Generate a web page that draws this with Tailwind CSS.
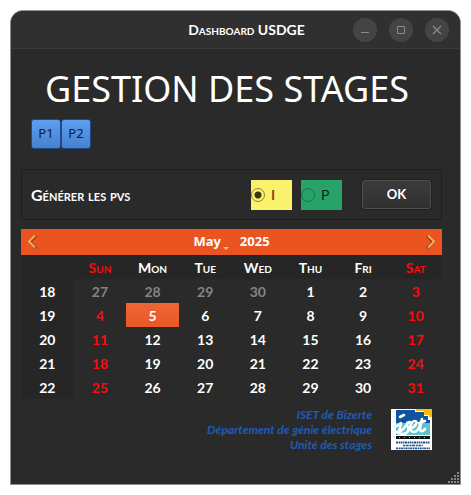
<!DOCTYPE html>
<html lang="fr">
<head>
<meta charset="utf-8">
<meta name="viewport" content="width=device-width, initial-scale=1">
<title>Dashboard USDGE</title>
<script src="https://cdn.jsdelivr.net/npm/@tailwindcss/browser@4"></script>
</head>
<body class="flex min-h-screen bg-white p-[10px] font-['Lato',sans-serif] text-[14px] text-white">
<div class="relative flex-1 overflow-hidden rounded-t-[13px] border border-[#8f8f8f] bg-[#2a2a2a]">
  <header class="relative flex h-[38px] items-center justify-end gap-[12px] border-b border-[#3a3a3a] bg-[#303030] pr-[11px]">
    <h2 class="absolute inset-x-0 text-center text-[14px] font-bold [font-variant-caps:small-caps] pl-[22px]">Dashboard USDGE</h2>
    <button aria-label="Réduire" class="relative size-[24px] rounded-full bg-[#444]"><svg class="size-[24px]" viewBox="0 0 24 24" fill="none" stroke="#8a8a8a"><path d="M8 14.500h8"/></svg></button>
    <button aria-label="Agrandir" class="relative size-[24px] rounded-full bg-[#444]"><svg class="size-[24px]" viewBox="0 0 24 24" fill="none" stroke="#8a8a8a"><path d="M8.500 8.500h7v7h-7z"/></svg></button>
    <button aria-label="Fermer" class="relative size-[24px] rounded-full bg-[#444]"><svg class="size-[24px]" viewBox="0 0 24 24" fill="none" stroke="#8a8a8a" stroke-width="1.200"><path d="M8 8l8 8M16 8l-8 8"/></svg></button>
  </header>

  <main class="pt-[20px] pr-[18px] pl-[10px]">
    <h1 class="pl-[24px] font-['Noto_Sans',sans-serif] text-[36px] leading-[40px] whitespace-nowrap">GESTION DES STAGES</h1>

    <div class="mt-[10px] flex pl-[10px] font-['Noto_Sans',sans-serif] text-[13px] text-[#101c30]">
      <button class="size-[30px] rounded-[3px] border border-[#1c4b8c] bg-linear-to-b from-[#5e9ff2] to-[#4682cd]">P1</button>
      <button class="size-[30px] rounded-[3px] border border-[#1c4b8c] bg-linear-to-b from-[#5e9ff2] to-[#4682cd]">P2</button>
    </div>

    <form class="mt-[20px] flex h-[51px] items-center border border-[#1f1f1f] pr-[10px] pl-[9px]">
      <span class="flex-1 text-[16px] font-bold [font-variant-caps:small-caps]">Générer les pvs</span>
      <label class="mr-[9px] flex h-[30px] w-[41px] items-center gap-[6px] bg-[#faf16d] font-bold text-[#8a4a10]">
        <input type="radio" name="kind" checked class="size-[14px] appearance-none rounded-full border border-[#8c863a] checked:bg-[radial-gradient(circle,#37340f_3px,transparent_4px)]">I
      </label>
      <label class="mr-[20px] flex h-[30px] w-[41px] items-center gap-[6px] bg-[#27a269] text-[#0a2418]">
        <input type="radio" name="kind" class="size-[14px] appearance-none rounded-full border border-[#1a754a] checked:bg-[radial-gradient(circle,#0a2418_3px,transparent_4px)]">P
      </label>
      <button type="button" class="h-[29px] w-[69px] rounded-[3px] border border-[#505050] bg-linear-to-b from-[#3b3b3b] to-[#303030] text-[13px] font-bold shadow-[0_0_0_1px_#1f1f1f]">OK</button>
    </form>

    <section class="mt-[9px]">
      <div class="flex h-[26px] items-center justify-between bg-[#e95420] px-[6px] font-['Noto_Sans',sans-serif] text-[13px] font-bold">
        <button aria-label="Mois précédent"><svg class="h-[16px] w-[12px]" viewBox="0 0 12 16" fill="none" stroke-width="2.500"><path d="M9 2L3 8l6 6" stroke="#9c3c18"/><path d="M8 1.500L2 7.500l6 6" stroke="#f0b070" stroke-width="1.800"/></svg></button>
        <div class="flex items-center gap-[11px]">
          <button class="flex items-center gap-[2px]">May<svg class="mt-[12px] h-[3px] w-[6px]" viewBox="0 0 6 3"><path d="M0 0h6L3 3z" fill="#f7b69d"/></svg></button>
          <button>2025</button>
        </div>
        <button aria-label="Mois suivant"><svg class="h-[16px] w-[12px]" viewBox="0 0 12 16" fill="none" stroke-width="2.500"><path d="M3 2l6 6-6 6" stroke="#9c3c18"/><path d="M4 1.500l6 6-6 6" stroke="#f0b070" stroke-width="1.800"/></svg></button>
      </div>
      <table class="w-full table-fixed border-collapse text-center font-bold">
        <thead><tr class="h-[24px] bg-[#262626] [font-variant-caps:small-caps]">
          <td></td><th class="text-[#f80c0c]">Sun</th><th>Mon</th><th>Tue</th><th>Wed</th><th>Thu</th><th>Fri</th><th class="text-[#f80c0c]">Sat</th>
        </tr></thead>
        <tbody>
          <tr class="h-[24px]"><th class="bg-[#262626]">18</th><td class="text-[#858585]">27</td><td class="text-[#858585]">28</td><td class="text-[#858585]">29</td><td class="text-[#858585]">30</td><td>1</td><td>2</td><td class="text-[#f80c0c]">3</td></tr>
          <tr class="h-[24px]"><th class="bg-[#262626]">19</th><td class="text-[#f80c0c]">4</td><td class="bg-linear-to-b from-[#ee6636] to-[#e95724]">5</td><td>6</td><td>7</td><td>8</td><td>9</td><td class="text-[#f80c0c]">10</td></tr>
          <tr class="h-[24px]"><th class="bg-[#262626]">20</th><td class="text-[#f80c0c]">11</td><td>12</td><td>13</td><td>14</td><td>15</td><td>16</td><td class="text-[#f80c0c]">17</td></tr>
          <tr class="h-[24px]"><th class="bg-[#262626]">21</th><td class="text-[#f80c0c]">18</td><td>19</td><td>20</td><td>21</td><td>22</td><td>23</td><td class="text-[#f80c0c]">24</td></tr>
          <tr class="h-[24px]"><th class="bg-[#262626]">22</th><td class="text-[#f80c0c]">25</td><td>26</td><td>27</td><td>28</td><td>29</td><td>30</td><td class="text-[#f80c0c]">31</td></tr>
        </tbody>
      </table>
    </section>

    <footer class="mt-[8px] flex items-center justify-end gap-[19px] pr-[10px]">
      <p class="text-right text-[12px] leading-[15px] font-bold text-[#1f5cb4] italic">ISET de Bizerte<br>Département de génie électrique<br>Unité des stages</p>
      <svg class="size-[41px]" viewBox="0 0 41 41" role="img" aria-label="ISET">
        <rect width="41" height="41" fill="#fff"/>
        <path d="M5 1h27l4 6h3v9H5z" fill="#1253a0"/>
        <path d="M5 14h34v12H5z" fill="#5cc3cc"/>
        <path d="M24 0h17v11h-4V7h-4V3h-9z" fill="#fff"/>
        <path d="M25 0h16v8h-3V6h-5V2h-8z" fill="#fdb913"/>
        <g fill="none" stroke="#fff" stroke-width="2.600" stroke-linecap="round" stroke-linejoin="round">
          <path d="M6 17l4-3c0 4-3 8-1 8 4 0 6-8 10-9-4 0-4 3-2 5 2 3-1 7-5 7-3 0-5-1-6-2"/>
          <path d="M20 19c5-1 7-7 4-7-5 0-7 11-1 11 4 0 7-8 8-13-1 5-3 12-1 12 2 1 3-1 4-2M28 14l6-2"/>
          <path d="M9 8l4-2"/>
        </g>
        <path d="M5 27h34v3H5z" fill="#111"/>
        <path d="M8 28.500h29" stroke="#aaa" stroke-dasharray="1 4"/>
        <g stroke="#1e5291" stroke-width="2"><path d="M5 33.500h34" stroke-dasharray="2 .6 1.400 .5"/><path d="M12 36.500h20" stroke-dasharray="2 .6 3 .8" stroke-width="1.500"/><path d="M5 39.300h34" stroke-dasharray="2.200 .6 1.400 .5" stroke-width="1.700"/></g>
        <path d="M3 2v28" stroke="#cfd6dc" stroke-dasharray="1 4"/>
      </svg>
    </footer>
  </main>
  <svg class="absolute right-0 bottom-0 size-[12px]" viewBox="0 0 12 12" fill="#858585" aria-hidden="true"><path d="M9 0h2v2H9zM6 3h2v2H6zM9 3h2v2H9zM3 6h2v2H3zM6 6h2v2H6zM9 6h2v2H9zM0 9h2v2H0zM3 9h2v2H3zM6 9h2v2H6zM9 9h2v2H9z"/></svg>
</div>
</body>
</html>
